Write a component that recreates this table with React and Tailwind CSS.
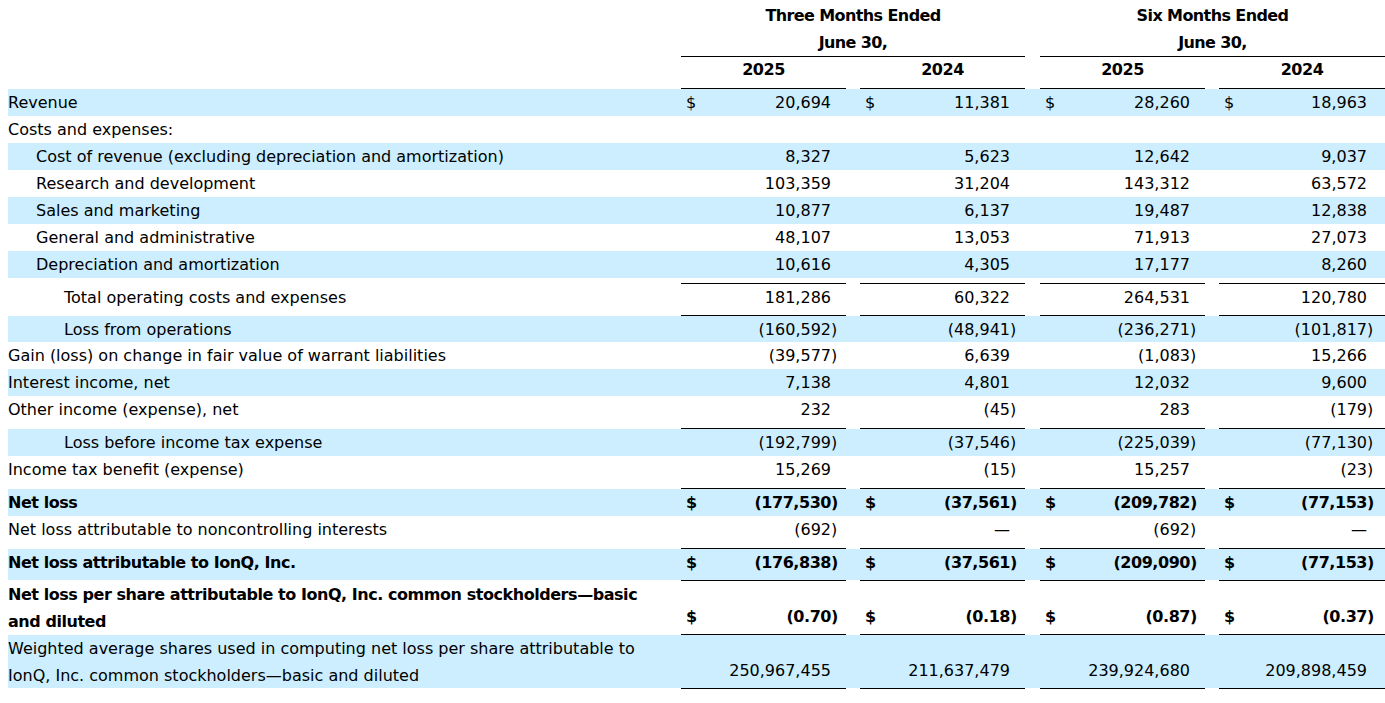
import clsx from "clsx";

const widths = ["w-[165px]", "w-[165px]", "w-[165px]", "w-[166px]"];
const gaps = ["", "ml-[14px]", "ml-[15px]", "ml-[14px]"];
const rpad = ["pr-[9px]", "pr-[9px]", "pr-[9px]", "pr-[12px]"];
const pads = ["pl-0", "pl-[28px]", "pl-[56px]"];

function Rule({ group = false }) {
    return (
        <div className="flex h-px">
            <div className="w-[673px] shrink-0" />
            {group ? (
                <>
                    <div className="w-[344px] bg-black" />
                    <div className="ml-[15px] w-[345px] bg-black" />
                </>
            ) : (
                widths.map((w, i) => <div key={i} className={clsx(w, gaps[i], "bg-black")} />)
            )}
        </div>
    );
}

function Gap() {
    return <div className="h-[5px]" />;
}

function Val({ value, dollar }) {
    const paren = value.startsWith("(");
    const num = paren ? value.slice(0, -1) : value;
    return (
        <>
            <span>{dollar ? "$" : ""}</span>
            <span className="flex">
                <span>{num}</span>
                <span className="w-[6px]">{paren ? ")" : ""}</span>
            </span>
        </>
    );
}

function Row({ label, indent = 0, bold, blue, dollar, v, size = "h-[27px]", align = "items-center" }) {
    return (
        <div className={clsx("flex", size, blue && "bg-[#cceeff]", bold && "font-bold tracking-[-0.45px]")}>
            <div className={clsx("w-[673px] shrink-0 leading-[27px]", pads[indent])}>{label}</div>
            {v &&
                v.map((x, i) => (
                    <div
                        key={i}
                        className={clsx(widths[i], gaps[i], rpad[i], "flex justify-between pl-[5px] leading-[27px]", align)}
                    >
                        <Val value={x} dollar={dollar} />
                    </div>
                ))}
        </div>
    );
}

export default function App() {
    return (
        <div className="w-[1385px] min-h-[703px] bg-white pl-[8px] text-[16px] text-black font-['DejaVu_Sans',sans-serif]">
            {/* column headers */}
            <div className="flex h-[56px] pt-[2px] font-bold leading-[27px] tracking-[-0.6px] text-center">
                <div className="w-[673px] shrink-0" />
                <div className="w-[344px]">Three Months Ended<br />June 30,</div>
                <div className="ml-[15px] w-[345px]">Six Months Ended<br />June 30,</div>
            </div>
            <Rule group />
            <div className="flex h-[26px] items-center font-bold tracking-[-0.45px] text-center">
                <div className="w-[673px] shrink-0" />
                {["2025", "2024", "2025", "2024"].map((y, i) => (
                    <div key={i} className={clsx(widths[i], gaps[i])}>{y}</div>
                ))}
            </div>
            <Gap />
            <Rule />

            <Row label="Revenue" blue dollar v={["20,694", "11,381", "28,260", "18,963"]} />
            <Row label="Costs and expenses:" />
            <Row label="Cost of revenue (excluding depreciation and amortization)" indent={1} blue v={["8,327", "5,623", "12,642", "9,037"]} />
            <Row label="Research and development" indent={1} v={["103,359", "31,204", "143,312", "63,572"]} />
            <Row label="Sales and marketing" indent={1} blue v={["10,877", "6,137", "19,487", "12,838"]} />
            <Row label="General and administrative" indent={1} v={["48,107", "13,053", "71,913", "27,073"]} />
            <Row label="Depreciation and amortization" indent={1} blue v={["10,616", "4,305", "17,177", "8,260"]} />
            <Gap />
            <Rule />
            <Row label="Total operating costs and expenses" indent={2} size="h-[26px]" v={["181,286", "60,322", "264,531", "120,780"]} />
            <Gap />
            <Rule />
            <Row label="Loss from operations" indent={2} blue size="h-[26px]" v={["(160,592)", "(48,941)", "(236,271)", "(101,817)"]} />
            <Row label="Gain (loss) on change in fair value of warrant liabilities" v={["(39,577)", "6,639", "(1,083)", "15,266"]} />
            <Row label="Interest income, net" blue v={["7,138", "4,801", "12,032", "9,600"]} />
            <Row label="Other income (expense), net" v={["232", "(45)", "283", "(179)"]} />
            <Gap />
            <Rule />
            <Row label="Loss before income tax expense" indent={2} blue v={["(192,799)", "(37,546)", "(225,039)", "(77,130)"]} />
            <Row label="Income tax benefit (expense)" v={["15,269", "(15)", "15,257", "(23)"]} />
            <Gap />
            <Rule />
            <Row label="Net loss" bold blue dollar v={["(177,530)", "(37,561)", "(209,782)", "(77,153)"]} />
            <Row label="Net loss attributable to noncontrolling interests" v={["(692)", "—", "(692)", "—"]} />
            <Gap />
            <Rule />
            <Row label="Net loss attributable to IonQ, Inc." bold blue dollar size="h-[31px]" align="items-start" v={["(176,838)", "(37,561)", "(209,090)", "(77,153)"]} />
            <Rule />
            <Row
                label={<>Net loss per share attributable to IonQ, Inc. common stockholders—basic<br />and diluted</>}
                bold
                dollar
                size="h-[53px]"
                align="items-end pb-[4px]"
                v={["(0.70)", "(0.18)", "(0.87)", "(0.37)"]}
            />
            <Rule />
            <Row
                label={<>Weighted average shares used in computing net loss per share attributable to<br />IonQ, Inc. common stockholders—basic and diluted</>}
                blue
                size="h-[53px]"
                align="items-end pb-[4px]"
                v={["250,967,455", "211,637,479", "239,924,680", "209,898,459"]}
            />
            <Rule />
        </div>
    );
}
